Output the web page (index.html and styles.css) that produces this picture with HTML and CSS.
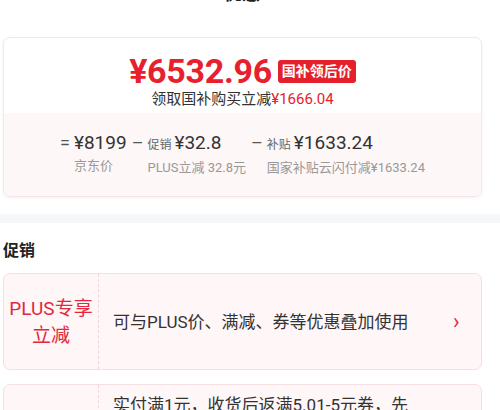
FILE: index.html
```html
<!DOCTYPE html>
<html lang="zh-CN">
<head>
  <meta charset="UTF-8">
  <meta name="viewport" content="width=device-width, initial-scale=1.0">
  <title>优惠</title>
  <link rel="stylesheet" href="styles.css">
</head>
<body>
  <div class="header">
    <span class="title">优惠</span>
    <span class="close">×</span>
  </div>

  <div class="wrap">
    <div class="price-card">
      <div class="price-top">
        <div class="price-main">
          <span class="price-big">¥6532.96</span>
          <span class="tag">国补领后价</span>
        </div>
        <div class="price-sub">领取国补购买立减<em>¥1666.04</em></div>
      </div>
      <div class="calc">
        <div class="calc-item">
          <span class="op">=</span>
          <div class="calc-col">
            <div class="val">¥8199</div>
            <div class="lbl">京东价</div>
          </div>
        </div>
        <div class="calc-item">
          <span class="op">–</span>
          <div class="calc-col">
            <div class="val"><small>促销</small>¥32.8</div>
            <div class="lbl">PLUS立减 32.8元</div>
          </div>
        </div>
        <div class="calc-item">
          <span class="op">–</span>
          <div class="calc-col">
            <div class="val"><small>补贴</small>¥1633.24</div>
            <div class="lbl">国家补贴云闪付减¥1633.24</div>
          </div>
        </div>
      </div>
    </div>
  </div>

  <div class="band"></div>

  <div class="wrap">
    <h2 class="section-title">促销</h2>

    <div class="promo">
      <div class="promo-tag">PLUS专享<br>立减</div>
      <div class="promo-text">可与PLUS价、满减、券等优惠叠加使用</div>
      <span class="arrow">›</span>
    </div>

    <div class="promo promo-long">
      <div class="promo-tag">返券</div>
      <div class="promo-text">实付满1元，收货后返满5.01-5元券，先用后付可叠加使用，每个用户限领一次</div>
      <span class="arrow">›</span>
    </div>
  </div>
</body>
</html>
```

FILE: styles.css
```css
body {
  margin: 0;
  font-family: Roboto, "Noto Sans CJK SC", sans-serif;
  color: #333;
  background: #fff;
  overflow: hidden;
}
.header {
  height: 8px;
  position: relative;
  overflow: hidden;
}
.header .title {
  position: absolute;
  left: 224px;
  top: -18px;
  font-size: 18px;
  font-weight: bold;
  line-height: 24px;
  color: #222;
}
.header .close {
  position: absolute;
  right: 22px;
  top: -20px;
  font-size: 26px;
  line-height: 26px;
  color: #999;
}
.wrap {
  padding: 0 18px 0 3px;
}
.price-card {
  margin-top: 29px;
  border: 1px solid #f4e6e6;
  border-radius: 7px;
  overflow: hidden;
  box-shadow: 0 1px 3px rgba(220, 200, 200, 0.25);
}
.price-top {
  padding: 15px 0 4px;
  text-align: center;
}
.price-main {
  display: flex;
  justify-content: center;
  align-items: center;
  gap: 6px;
  height: 36px;
}
.price-big {
  font-family: Roboto, sans-serif;
  font-size: 34px;
  font-weight: bold;
  color: #e8202e;
  letter-spacing: -0.3px;
}
.tag {
  background: #e4202c;
  color: #fff;
  font-size: 14px;
  font-weight: bold;
  line-height: 23px;
  padding: 0 4px;
  border-radius: 3px;
}
.price-sub {
  font-size: 15px;
  line-height: 20px;
  color: #333;
}
.price-sub em {
  font-style: normal;
  color: #e8202e;
}
.calc {
  background: #fdf7f7;
  display: flex;
  justify-content: center;
  gap: 5px;
  padding: 18px 0 17px;
}
.calc-item {
  display: flex;
  gap: 4px;
}
.op {
  font-size: 18px;
  line-height: 24px;
  color: #555;
}
.val {
  font-size: 19px;
  line-height: 24px;
  color: #333;
  white-space: nowrap;
}
.val small {
  font-size: 12px;
  color: #666;
  margin-right: 3px;
}
.lbl {
  font-size: 13px;
  line-height: 22px;
  color: #999;
  white-space: nowrap;
}
.band {
  height: 9px;
  background: #f6f7f9;
  margin-top: 17px;
}
.section-title {
  margin: 16px 0 10px;
  font-size: 16px;
  line-height: 24px;
  font-weight: bold;
  color: #222;
}
.promo {
  display: flex;
  align-items: center;
  background: #fef6f7;
  border: 1px solid #f5dfe2;
  border-radius: 7px;
  min-height: 95px;
  margin-bottom: 14px;
}
.promo-tag {
  width: 94px;
  align-self: stretch;
  display: flex;
  align-items: center;
  justify-content: center;
  text-align: center;
  border-right: 1px dashed #f0d4d8;
  font-size: 19px;
  line-height: 27px;
  color: #e3283e;
}
.promo-text {
  flex: 1;
  padding: 6px 38px 6px 14px;
  font-size: 17px;
  line-height: 26px;
  color: #333;
}
.promo-long {
  align-items: flex-start;
}
.promo-long .promo-text {
  padding-top: 7px;
  padding-bottom: 12px;
}
.promo-long .arrow {
  align-self: center;
}
.arrow {
  width: 28px;
  font-size: 22px;
  color: #e3283e;
}
```
